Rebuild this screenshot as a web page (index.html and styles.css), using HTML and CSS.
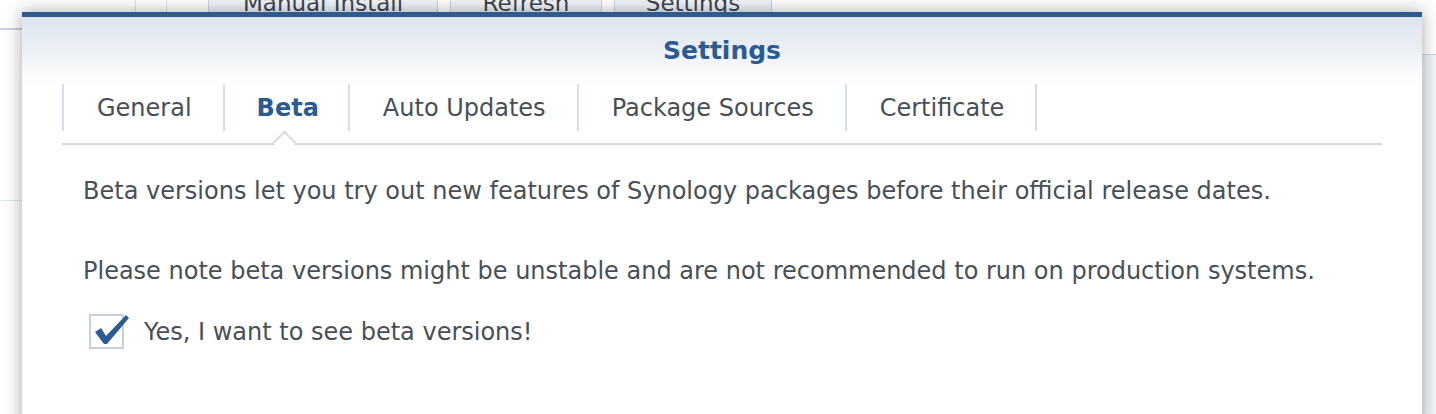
FILE: index.html
```html
<!DOCTYPE html>
<html>
<head>
<meta charset="utf-8">
<link rel="stylesheet" href="styles.css">
</head>
<body>
<div class="app">
  <div class="toolbar">
    <div class="vsep sep-a"></div>
    <div class="vsep sep-b"></div>
    <div class="tbtn btn-manual">Manual Install</div>
    <div class="tbtn btn-refresh">Refresh</div>
    <div class="tbtn btn-settings">Settings</div>
  </div>
  <div class="hline-left"></div>
  <div class="hline-left2"></div>
  <div class="right-panel"></div>
</div>

<div class="dialog">
  <div class="header">
    <div class="title">Settings</div>
    <div class="tabs">
      <div class="tab">General</div>
      <div class="tab active">Beta</div>
      <div class="tab">Auto Updates</div>
      <div class="tab">Package Sources</div>
      <div class="tab">Certificate</div>
    </div>
  </div>
  <div class="tabline"><span class="notch"></span></div>
  <div class="content">
    <p class="para">Beta versions let you try out new features of Synology packages before their official release dates.</p>
    <p class="para para2">Please note beta versions might be unstable and are not recommended to run on production systems.</p>
    <label class="check">
      <span class="box">
        <svg class="tick" width="40" height="36" viewBox="0 0 40 36">
          <path d="M4 20 L10 16 L15 24 L35 3 L38 6 L16 32 L13 32 Z" fill="#2d5b93"/>
        </svg>
      </span>
      <span class="check-label">Yes, I want to see beta versions!</span>
    </label>
  </div>
</div>
</body>
</html>
```
FILE: styles.css
```css
html, body {
  margin: 0;
  padding: 0;
}
body {
  width: 1436px;
  height: 414px;
  overflow: hidden;
  position: relative;
  background: #ffffff;
  font-family: "DejaVu Sans", Verdana, sans-serif;
}
.app {
  position: relative;
  width: 1436px;
  height: 414px;
}
.toolbar {
  display: flex;
  height: 12px;
  overflow: hidden;
  position: relative;
}
.vsep {
  width: 1px;
  height: 12px;
  background: #dde2e8;
}
.sep-a { margin-left: 135px; }
.sep-b { margin-left: 30px; }
.tbtn {
  height: 32px;
  margin-top: -12px;
  box-sizing: border-box;
  border: 1px solid #c9d4e0;
  background: linear-gradient(#f7f9fc, #eaf0f7);
  color: #3e4650;
  font-size: 23px;
  line-height: 28px;
  text-align: center;
  white-space: nowrap;
}
.btn-manual { margin-left: 41px; width: 230px; }
.btn-refresh { margin-left: 12px; width: 152px; }
.btn-settings { margin-left: 12px; width: 158px; }
.hline-left {
  position: absolute;
  left: 0;
  top: 28px;
  width: 30px;
  height: 2px;
  background: #c8d0da;
}
.hline-left2 {
  position: absolute;
  left: 0;
  top: 200px;
  width: 30px;
  height: 1px;
  background: #dfe5ec;
}
.right-panel {
  position: absolute;
  left: 1400px;
  top: 54px;
  width: 36px;
  height: 360px;
  border-top: 1px solid #cfd5dc;
  background: linear-gradient(to right, #e9edf2, #f3f6f9);
}

.dialog {
  position: absolute;
  left: 22px;
  top: 12px;
  width: 1400px;
  height: 420px;
  box-sizing: border-box;
  border-top: 5px solid #2f5a8b;
  background: #ffffff;
  box-shadow: 0 0 16px rgba(0, 0, 0, 0.35);
}
.header {
  background: linear-gradient(#dce4ee 0px, #edf1f6 35px, #ffffff 68px);
  padding: 0 40px;
}
.title {
  height: 67px;
  line-height: 68px;
  text-align: center;
  font-size: 25px;
  font-weight: bold;
  color: #2b5b92;
}
.tabs {
  display: flex;
  height: 47px;
  border-left: 2px solid #d6dee9;
}
.tab {
  padding: 0 31px 0 33px;
  border-right: 2px solid #d6dee9;
  font-size: 24px;
  line-height: 49px;
  color: #474f58;
  white-space: nowrap;
}
.tab.active {
  font-weight: bold;
  color: #2b5b92;
  padding: 0 29px 0 32px;
}
.tabline {
  position: relative;
  margin: 12px 40px 0;
  height: 2px;
  background: #d9d9d9;
  box-shadow: 0 2px 4px rgba(0, 0, 0, 0.06);
}
.notch {
  position: absolute;
  left: 214px;
  top: -9px;
  width: 15px;
  height: 15px;
  background: #ffffff;
  border-left: 2px solid #dadada;
  border-top: 2px solid #dadada;
  transform: rotate(45deg);
}
.content {
  padding: 0 0 0 61px;
}
.para {
  margin: 0;
  font-size: 24px;
  line-height: 28px;
  color: #474f58;
  padding-top: 32px;
}
.para2 {
  padding-top: 52px;
}
.check {
  display: flex;
  align-items: center;
  margin-top: 29px;
  margin-left: 6px;
}
.box {
  position: relative;
  width: 35px;
  height: 35px;
  box-sizing: border-box;
  border: 2px solid #c6d0dd;
  background: #ffffff;
}
.tick {
  position: absolute;
  left: 0px;
  top: -4px;
}
.check-label {
  margin-left: 20px;
  font-size: 24px;
  line-height: 28px;
  color: #474f58;
}
```
